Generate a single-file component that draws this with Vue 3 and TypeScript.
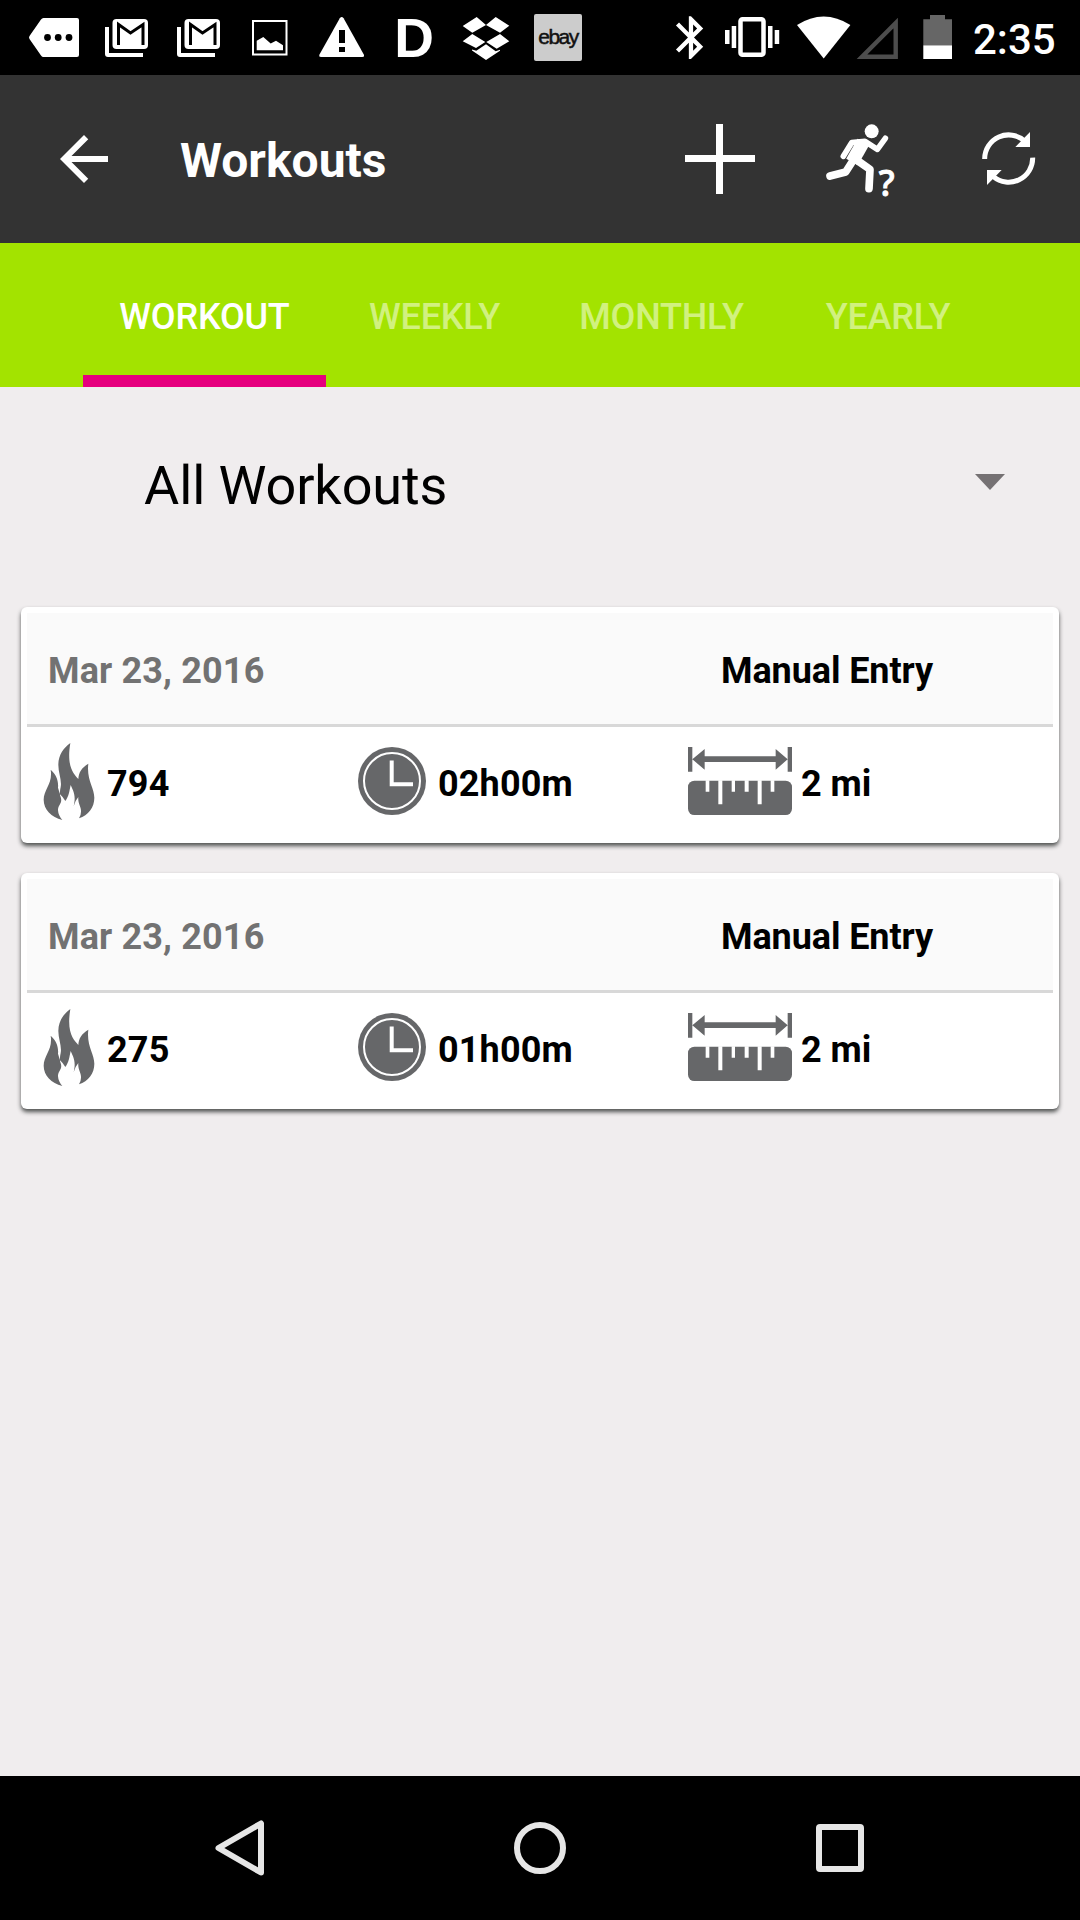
<script setup lang="ts">
interface Workout {
  id: number
  date: string
  source: string
  calories: string
  duration: string
  distance: string
}

interface Tab {
  label: string
  width: number
}

const tabs: Tab[] = [
  { label: 'WORKOUT', width: 243 },
  { label: 'WEEKLY', width: 217 },
  { label: 'MONTHLY', width: 237 },
  { label: 'YEARLY', width: 216 },
]
const activeTab = 'WORKOUT'

const workouts: Workout[] = [
  { id: 1, date: 'Mar 23, 2016', source: 'Manual Entry', calories: '794', duration: '02h00m', distance: '2 mi' },
  { id: 2, date: 'Mar 23, 2016', source: 'Manual Entry', calories: '275', duration: '01h00m', distance: '2 mi' },
]
</script>

<template>
  <div class="screen">
    <div class="status">
      <svg class="cell" viewBox="18 0 72 75">
        <path d="M43.500 18H77q2 0 2 2V55q0 2-2 2H43.500q-1.500 0-2.500-1.500L29.500 39q-1-1.500 0-3L41 19.500Q42 18 43.500 18z" fill="#fff" />
        <g fill="#000"><circle cx="47.500" cy="37.500" r="3.400" /><circle cx="58.200" cy="37.500" r="3.400" /><circle cx="69" cy="37.500" r="3.400" /></g>
      </svg>
      <svg v-for="n in 2" :key="n" class="cell" viewBox="90 0 72 75">
        <path d="M105 27h4v26h34v4h-35q-3 0-3-3z" fill="#fff" />
        <rect x="112.500" y="19" width="35.500" height="30" rx="4" fill="#fff" />
        <path d="M118.500 45V24.500L130.500 33l12.500-8.500V45" fill="none" stroke="#000" stroke-width="3" />
      </svg>
      <svg class="cell" viewBox="234 0 72 75">
        <rect x="253" y="21" width="33.500" height="33.500" fill="none" stroke="#fff" stroke-width="2" />
        <path d="M256.700 50.300v-9.500l6.600-3.800 7.400 6.500 5.300-2.700 7 4.500v5z" fill="#fff" />
      </svg>
      <svg class="cell" viewBox="306 0 72 75">
        <path d="M339.800 18.200q1.900-2.500 3.800 0L363.800 54.500q1 2.500-1.500 2.500H321q-2.500 0-1.500-2.500z" fill="#fff" />
        <path d="M339 30h6v13h-6zM339 47h6v5h-6z" fill="#000" />
      </svg>
      <div class="cell letter">D</div>
      <svg class="cell" viewBox="450 0 72 75">
        <path d="M462.700 26L476.700 17l9.300 8-13.700 7.700zM486 25l9.700-8 13.600 8.700-9.300 7zM462.700 41.300l9.600-7.300 13 8-9.300 6zM486.300 42l13.700-8 9.300 7.300-12.600 7.400zM472 49.500l4.300 1.200 9.700-6.400 9.700 7 4.300-1.500v1L486 60l-14-9.500z" fill="#fff" />
      </svg>
      <div class="cell"><div class="ebay">ebay</div></div>

      <svg class="sys" width="124" viewBox="666 0 124 75">
        <g transform="translate(665.300 11.900) scale(2.140)" fill="#fff">
          <path d="M17.710 7.710L12 2h-1v7.590L6.410 5 5 6.410 10.590 12 5 17.590 6.410 19 11 14.410V22h1l5.710-5.710-4.300-4.290 4.300-4.290zM13 5.830l1.880 1.880L13 9.590V5.830zm1.880 10.460L13 18.170v-3.760l1.880 1.880z" />
        </g>
        <rect x="740.500" y="19.250" width="23" height="35.500" rx="2" fill="none" stroke="#fff" stroke-width="4.500" />
        <path d="M731.700 26h4.500v22h-4.500zM725 30h4.500v14H725zM768 26h4.500v22H768zM774.700 30h4.500v14h-4.500z" fill="#fff" />
      </svg>
      <svg width="170" viewBox="790 0 170 75">
        <path d="M823.700 58.500L797 25q26.700-17 53.400 0z" fill="#fff" />
        <path d="M862 56.700H895.700V23z" fill="none" stroke="#4d4d4d" stroke-width="4.400" />
        <path d="M923.300 19.300h6.700v-4.300h15v4.300h7v26h-28.700z" fill="#666" />
        <path d="M923.300 45.300h28.700V59h-28.700z" fill="#fff" />
      </svg>
      <span class="time">2:35</span>
    </div>

    <header class="bar">
      <svg width="72" height="72" viewBox="0 0 24 24"><path d="M20 11H7.830l5.590-5.590L12 4l-8 8 8 8 1.410-1.410L7.830 13H20v-2z" fill="#fff" /></svg>
      <h1>Workouts</h1>
      <svg class="actions" width="420" height="160" viewBox="0 0 1260 480">
        <path d="M168 102h21v93h96v21h-96v96h-21v-96H75v-21h93z" fill="#fff" />
        <circle cx="635" cy="124" r="21" fill="#fff" />
        <g fill="none" stroke="#fff" stroke-linecap="round" stroke-linejoin="round">
          <path d="M550 199L575 158 615 154 652 178 676 145" stroke-width="17" />
          <path d="M610 156L576 216" stroke-width="40" stroke-linecap="butt" />
          <path d="M582 207L557 246 510 258" stroke-width="23" />
          <path d="M590 210L630 238 627 296" stroke-width="23" />
        </g>
        <g fill="none" stroke="#fff" stroke-width="15">
          <path d="M974 207A72 72 0 0 1 1094 153" />
          <path d="M1118 203A72 72 0 0 1 1000 260" />
        </g>
        <path d="M1110 126V171H1066zM981 240H1025L981 285z" fill="#fff" />
        <text x="656" y="319" class="qmark">?</text>
      </svg>
    </header>

    <nav class="tabs">
      <div v-for="t in tabs" :key="t.label" class="tab" :class="{ active: t.label === activeTab }" :style="{ width: t.width + 'px' }">{{ t.label }}</div>
    </nav>

    <main>
      <div class="filter">
        <span>All Workouts</span>
        <svg width="30" height="16" viewBox="0 0 30 16"><path d="M0 0H30L15 16z" fill="#757173" /></svg>
      </div>

      <section v-for="w in workouts" :key="w.id" class="card">
        <div class="head">
          <span class="date">{{ w.date }}</span>
          <span class="source">{{ w.source }}</span>
        </div>
        <div class="stats">
          <div class="stat cal">
            <svg width="52" height="79" viewBox="130 455 156 237">
              <path d="M188 689C155 680 132 658 132 628C132 598 160 580 153 538C170 552 177 572 175 592Q178 602 181 612Q188 618 197 632C208 618 209 602 213 584C220 602 230 612 222 648Q227 630 236 620C234 640 245 650 244 664Q244 674 238 684C266 674 284 652 284 622C284 592 260 568 266 520C246 532 237 546 236 566C222 550 200 530 212 458C190 474 176 496 176 524C176 548 187 570 183 590Q180 602 181 615C192 640 175 640 175 660Q176 676 188 689z" fill="#666769" />
            </svg>
            <span>{{ w.calories }}</span>
          </div>
          <div class="stat dur">
            <svg width="68" height="68" viewBox="0 0 68 68">
              <circle cx="34" cy="34" r="34" fill="#666769" />
              <circle cx="34" cy="34" r="28" fill="none" stroke="#fff" stroke-width="2" />
              <path d="M33.700 13.500V37.300H55" fill="none" stroke="#fff" stroke-width="4" />
            </svg>
            <span>{{ w.duration }}</span>
          </div>
          <div class="stat dist">
            <svg width="104" height="68" viewBox="0 0 312 204">
              <path d="M0 0H13V74H0zM299 0H312V74H299zM13 37L50 6V28H263V6L299 37 263 68V45H50V68z" fill="#666769" />
              <rect y="101" width="312" height="103" rx="19" fill="#666769" />
              <path d="M53 100h11v34H53zM91 100h12v72H91zM131 100h10v34H131zM170 100h12v34H170zM209 100h12v72H209zM248 100h11v34H248z" fill="#fff" />
            </svg>
            <span>{{ w.distance }}</span>
          </div>
        </div>
      </section>
    </main>

    <footer class="nav">
      <svg width="56" height="60" viewBox="211 1818 56 60"><path d="M261 1823.500V1872.500L218.500 1848z" fill="none" stroke="#e6e6e6" stroke-width="6" stroke-linejoin="round" /></svg>
      <svg width="56" height="60" viewBox="512 1818 56 60"><circle cx="540" cy="1848" r="23" fill="none" stroke="#e6e6e6" stroke-width="6" /></svg>
      <svg width="56" height="60" viewBox="812 1818 56 60"><rect x="819" y="1827" width="42" height="42" rx="1" fill="none" stroke="#e6e6e6" stroke-width="6" stroke-linejoin="round" /></svg>
    </footer>
  </div>
</template>

<style>
body { margin: 0; background: #f0edee; }
</style>

<style scoped>
.screen {
  width: 1080px;
  height: 1920px;
  display: flex;
  flex-direction: column;
  background: #f0edee;
  font-family: Roboto, "Liberation Sans", sans-serif;
  overflow: hidden;
}
svg { display: block; flex: none; }
.status {
  flex: none;
  height: 75px;
  padding-left: 18px;
  display: flex;
  background: #000;
  color: #fff;
}
.status > svg { height: 75px; }
.cell {
  width: 72px;
  height: 75px;
  flex: none;
  display: flex;
  align-items: center;
  justify-content: center;
}
.letter {
  font: bold 55px/76px "Liberation Sans", sans-serif;
}
.ebay {
  width: 47.500px;
  height: 47.500px;
  border-radius: 2px;
  background: #ccc;
  color: #111;
  font: 21px/46px "Liberation Sans", sans-serif;
  letter-spacing: -1.500px;
  text-align: center;
  -webkit-text-stroke: 0.500px #111;
}
.sys { margin-left: 72px; }
.time {
  margin-left: 13px;
  font-size: 42px;
  font-weight: 500;
  line-height: 80px;
}
.bar {
  flex: none;
  height: 168px;
  padding-left: 48px;
  display: flex;
  align-items: center;
  background: #333;
}
h1 {
  margin: 4px 0 0 60px;
  width: 480px;
  color: #fff;
  font-size: 48px;
  font-weight: 700;
  line-height: 56px;
}
.actions { margin-top: 22px; }
.qmark {
  font: 500 106px "Noto Sans", sans-serif;
  fill: #fff;
  stroke: #fff;
  stroke-width: 3px;
}
.tabs {
  flex: none;
  height: 144px;
  padding-left: 83px;
  display: flex;
  background: #a3e300;
}
.tab {
  box-sizing: border-box;
  height: 144px;
  border-bottom: 12px solid transparent;
  padding-top: 2px;
  text-align: center;
  font-size: 36px;
  font-weight: 500;
  letter-spacing: -0.200px;
  line-height: 144px;
  color: rgba(255, 255, 255, 0.5);
  white-space: nowrap;
}
.tab.active {
  color: #fff;
  border-bottom-color: #e6007e;
}
main {
  flex: 1;
  display: flex;
  flex-direction: column;
  padding: 0 21px;
}
.filter {
  height: 190px;
  margin-bottom: 30px;
  padding: 0 54px 0 123px;
  display: flex;
  align-items: center;
  justify-content: space-between;
  font-size: 54px;
  letter-spacing: -0.100px;
  color: #000;
}
.filter span { margin-top: 6px; }
.card {
  box-sizing: border-box;
  height: 236px;
  margin-bottom: 30px;
  padding: 6px;
  border-radius: 6px;
  background: #fff;
  box-shadow: 0 3px 4px rgba(40, 44, 42, 0.8);
  color: #000;
  font-size: 36px;
  font-weight: 700;
}
.head {
  height: 111px;
  border-bottom: 3px solid #d8d8d8;
  background: #fafafa;
  display: flex;
  align-items: center;
}
.head span { line-height: 42px; margin-top: 5px; }
.head .date {
  width: 673px;
  padding-left: 21px;
  letter-spacing: 0.150px;
  color: #727272;
}
.head .source { letter-spacing: -0.100px; }
.stats {
  display: flex;
  height: 108px;
  align-items: center;
}
.stat {
  display: flex;
  align-items: center;
}
.stat span { margin-top: 5px; white-space: nowrap; }
.cal { width: 315px; padding-left: 16px; }
.cal span { margin-left: 12px; letter-spacing: 0.200px; }
.dur { width: 330px; }
.dur span { margin-left: 12px; letter-spacing: 0.150px; }
.dist span { margin-left: 9px; }
.nav {
  flex: none;
  height: 144px;
  padding: 0 212px 0 211px;
  display: flex;
  align-items: center;
  justify-content: space-between;
  background: #000;
}
</style>
